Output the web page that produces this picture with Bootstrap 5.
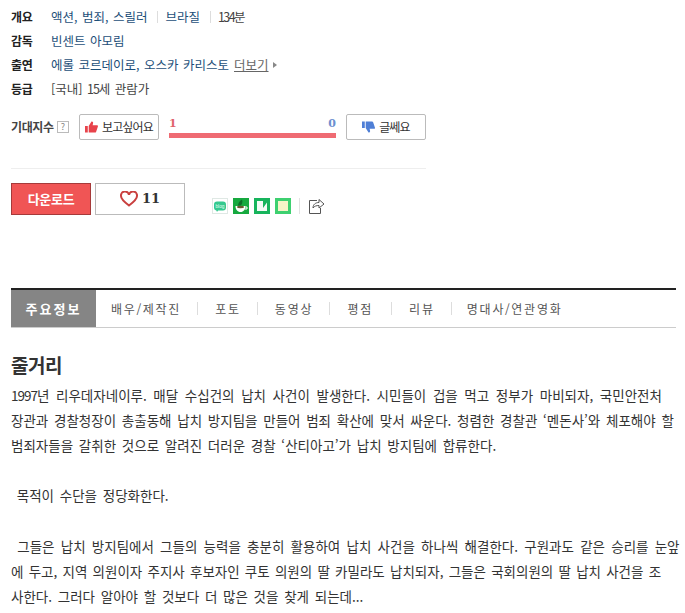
<!DOCTYPE html>
<html lang="ko">
<head>
  <meta charset="UTF-8">
  <title>줄거리</title>
  <link href="https://cdn.jsdelivr.net/npm/bootstrap@5.3.0/dist/css/bootstrap.min.css" rel="stylesheet">
  <style>
    body { font-family: "Noto Sans CJK KR", "Liberation Sans", sans-serif; font-size: 12px; color: #333; background: #fff; }
    a { text-decoration: none; color: inherit; }
    .page-wrap { width: 665px; margin-left: 11px; }

    .info-list { padding-top: 5px; }
    .info-row { height: 24px; line-height: 24px; font-size: 12.5px; word-spacing: 1px; }
    .info-label { width: 40px; font-size: 12px; font-weight: 700; color: #222; word-spacing: 0; letter-spacing: -0.2px; }
    .info-val { color: #1d4f79; }
    .info-sep { width: 1px; height: 12px; background: #ddd; margin: 0 7px 0 10px; }
    .info-plain { color: #444; }
    .info-runtime { letter-spacing: -1.6px; }
    .num-tight { letter-spacing: -1px; }
    .more-link { color: #666; text-decoration: underline; margin-left: 5px; }
    .more-arrow { width: 0; height: 0; border-left: 4px solid #888; border-top: 3px solid transparent; border-bottom: 3px solid transparent; margin-left: 4px; }

    .expect-row { width: 415px; margin-top: 13px; height: 26px; }
    .expect-label { font-weight: 700; color: #444; width: 46px; letter-spacing: -0.4px; white-space: nowrap; flex-shrink: 0; }
    .help-box { width: 12px; height: 12px; border: 1px solid #bbb; color: #888; font-size: 9px; line-height: 10px; text-align: center; margin-right: 10px; flex-shrink: 0; }
    .vote-btn { width: 80px; height: 26px; border: 1px solid #bbb; border-radius: 2px; background: #fff; font-size: 12px; color: #333; padding: 0; letter-spacing: -0.8px; flex-shrink: 0; }
    .score-box { width: 167px; margin: 0 10px; flex-shrink: 0; }
    .score-nums { height: 13px; font-family: "DejaVu Serif", serif; font-weight: 700; font-size: 11px; line-height: 13px; }
    .score-like { color: #e0636b; }
    .score-hate { color: #6d8fd0; }
    .score-bar { height: 5px; background: #ef6b73; margin-top: 3px; }
    .rule-line { width: 415px; height: 1px; background: #eee; margin-top: 28px; }

    .action-row { margin-top: 14px; height: 32px; }
    .down-btn { width: 80px; height: 32px; background: #f05555; border: 1px solid #a63a3a; color: #fff; font-weight: 700; font-size: 13px; padding: 0; border-radius: 0; letter-spacing: -0.3px; flex-shrink: 0; }
    .like-btn { width: 90px; height: 32px; margin-left: 4px; border: 1px solid #bbb; background: #fff; border-radius: 0; padding: 0; font-family: "DejaVu Serif", serif; font-weight: 700; font-size: 13px; color: #333; flex-shrink: 0; }
    .share-icons { margin-left: 27px; margin-top: 15px; gap: 5px; }
    .share-icons svg { display: block; }
    .share-sep { width: 1px; height: 16px; background: #e2e2e2; margin: 0 3px; }

    .tab-bar { margin-top: 73px; border-top: 2px solid #222; border-bottom: 1px solid #ccc; height: 40px; }
    .tab-on { width: 85px; height: 37px; line-height: 37px; background: #858585; color: #fff; font-weight: 700; text-align: center; letter-spacing: 2px; font-size: 13px; flex-shrink: 0; }
    .tab-item { height: 37px; line-height: 37px; color: #555; letter-spacing: 1.8px; font-size: 12px; white-space: nowrap; margin-left: 17px; margin-right: 16px; }
    .tab-first { margin-left: 15px; }
    .tab-wide { margin-right: 18px; }
    .tab-slash { margin: 0 -.3px; }
    .tab-sep { width: 1px; height: 13px; background: #ddd; }

    .plot-title { font-size: 19px; font-weight: 700; color: #333; margin: 24px 0 0; line-height: 26px; letter-spacing: -0.5px; }
    .plot-text { font-size: 13.5px; line-height: 25.1px; color: #333; margin: 5px 0 0; letter-spacing: 0; word-spacing: 1.95px; white-space: nowrap; }
    .plot-loose { word-spacing: 2.85px; }
    .plot-mid { word-spacing: 2.45px; }
    .plot-snug { word-spacing: 1.45px; }
  </style>
</head>
<body>
  <div class="page-wrap">

    <!-- movie info -->
    <div class="info-list">
      <div class="info-row d-flex align-items-center">
        <span class="info-label">개요</span>
        <span class="info-val">액션, 범죄, 스릴러</span><span class="info-sep"></span>
        <span class="info-val">브라질</span><span class="info-sep"></span>
        <span class="info-plain info-runtime">134분</span>
      </div>
      <div class="info-row d-flex align-items-center">
        <span class="info-label">감독</span>
        <span class="info-val">빈센트 아모림</span>
      </div>
      <div class="info-row d-flex align-items-center">
        <span class="info-label">출연</span>
        <span class="info-val">에롤 코르데이로, 오스카 카리스토</span>
        <a class="more-link" href="#">더보기</a><span class="more-arrow"></span>
      </div>
      <div class="info-row d-flex align-items-center">
        <span class="info-label">등급</span>
        <span class="info-plain">[국내] <span class="num-tight">15</span>세 관람가</span>
      </div>
    </div>

    <!-- expectation -->
    <div class="expect-row d-flex align-items-center">
      <span class="expect-label">기대지수</span>
      <span class="help-box">?</span>
      <button class="vote-btn d-flex align-items-center justify-content-center gap-1">
        <svg width="13" height="12" viewBox="0 0 14 12"><path d="M0 5h3v7H0zM4 5l3-5c1.500 0 2 1 1.600 2.400L8.200 4H13c1 0 1.200 1 .8 1.700L12 11c-.2.600-.6 1-1.200 1H4z" fill="#e8434b"/></svg>
        보고싶어요
      </button>
      <div class="score-box">
        <div class="score-nums d-flex justify-content-between"><span class="score-like">1</span><span class="score-hate">0</span></div>
        <div class="score-bar"></div>
      </div>
      <button class="vote-btn d-flex align-items-center justify-content-center gap-1">
        <svg width="13" height="12" viewBox="0 0 14 12"><path d="M0 0h3v7H0zM4 7l3 5c1.500 0 2-1 1.600-2.400L8.200 8H13c1 0 1.200-1 .8-1.700L12 1c-.2-.6-.6-1-1.200-1H4z" fill="#4f7fd6"/></svg>
        글쎄요
      </button>
    </div>
    <div class="rule-line"></div>

    <!-- actions -->
    <div class="action-row d-flex align-items-start">
      <button class="down-btn">다운로드</button>
      <button class="like-btn d-flex align-items-center justify-content-center gap-1">
        <svg width="18" height="16" viewBox="0 0 18 16"><path d="M9 14.500C3 10 1 7.500 1 5a3.800 3.800 0 0 1 8-1 3.800 3.800 0 0 1 8 1c0 2.500-2 5-8 9.500z" fill="none" stroke="#c9403f" stroke-width="2"/></svg>
        11
      </button>
      <div class="share-icons d-flex align-items-center">
        <svg width="16" height="16" viewBox="0 0 16 16"><rect x=".5" y=".5" width="15" height="15" fill="#fff" stroke="#dfe8e4"/><rect x="2" y="3.500" width="12" height="9" rx="3" fill="#35c98f"/><path d="M4 11.500l1 2.500 1.500-2.500z" fill="#35c98f"/><text x="8" y="9.500" font-size="4.800" fill="#e6fff4" text-anchor="middle" font-family="Liberation Sans">blog</text></svg>
        <svg width="16" height="16" viewBox="0 0 16 16"><rect width="16" height="16" fill="#16a93f"/><path d="M2.500 8h10c0 3.500-2 6-5 6s-5-2.500-5-6z" fill="#fff"/><path d="M12.500 9h1.500v2h-2" fill="none" stroke="#fff"/><ellipse cx="7.500" cy="9" rx="3.500" ry="1.200" fill="#6a5a2e"/><path d="M5 7.500c0-2 1.500-4.500 4-6 .8 2.500.3 4.800-1.500 6z" fill="#0d6e2a"/></svg>
        <svg width="16" height="16" viewBox="0 0 16 16"><rect width="16" height="16" fill="#17b45c"/><path d="M3 3h6v7l4-5.500V13H3z" fill="#f4fbf6"/></svg>
        <svg width="16" height="16" viewBox="0 0 16 16"><rect width="16" height="16" fill="#3ed070"/><rect x="3" y="3" width="10" height="10" fill="#f6f4c8"/></svg>
        <span class="share-sep"></span>
        <svg width="17" height="16" viewBox="0 0 17 16"><path d="M9 2.500H1.500v13h11V10" fill="none" stroke="#555"/><path d="M5 10c0-3.500 2.500-5.500 6-5.500V1.500l5 4.500-5 4V7.500C8.500 7.500 6.500 8 5 10z" fill="#fff" stroke="#555"/></svg>
      </div>
    </div>

    <!-- tabs -->
    <div class="tab-bar d-flex align-items-center">
      <div class="tab-on">주요정보</div>
      <a class="tab-item tab-first" href="#">배우<span class="tab-slash">/</span>제작진</a>
      <span class="tab-sep"></span>
      <a class="tab-item" href="#">포토</a>
      <span class="tab-sep"></span>
      <a class="tab-item" href="#">동영상</a>
      <span class="tab-sep"></span>
      <a class="tab-item tab-wide" href="#">평점</a>
      <span class="tab-sep"></span>
      <a class="tab-item" href="#">리뷰</a>
      <span class="tab-sep"></span>
      <a class="tab-item tab-first" href="#">명대사<span class="tab-slash">/</span>연관영화</a>
    </div>

    <!-- synopsis -->
    <h4 class="plot-title">줄거리</h4>
    <p class="plot-text"><span class="plot-loose"><span class="num-tight">1997</span>년 리우데자네이루. 매달 수십건의 납치 사건이 발생한다. 시민들이 겁을 먹고 정부가 마비되자, 국민안전처</span><br>장관과 경찰청장이 총출동해 납치 방지팀을 만들어 범죄 확산에 맞서 싸운다. 청렴한 경찰관 ‘멘돈사’와 체포해야 할<br>범죄자들을 갈취한 것으로 알려진 더러운 경찰 ‘산티아고’가 납치 방지팀에 합류한다.<br><br>&nbsp;목적이 수단을 정당화한다.<br><br><span class="plot-mid">&nbsp;그들은 납치 방지팀에서 그들의 능력을 충분히 활용하여 납치 사건을 하나씩 해결한다. 구원과도 같은 승리를 눈앞</span><br><span class="plot-snug">에 두고, 지역 의원이자 주지사 후보자인 쿠토 의원의 딸 카밀라도 납치되자, 그들은 국회의원의 딸 납치 사건을 조</span><br>사한다. 그러다 알아야 할 것보다 더 많은 것을 찾게 되는데...</p>
  </div>
</body>
</html>
